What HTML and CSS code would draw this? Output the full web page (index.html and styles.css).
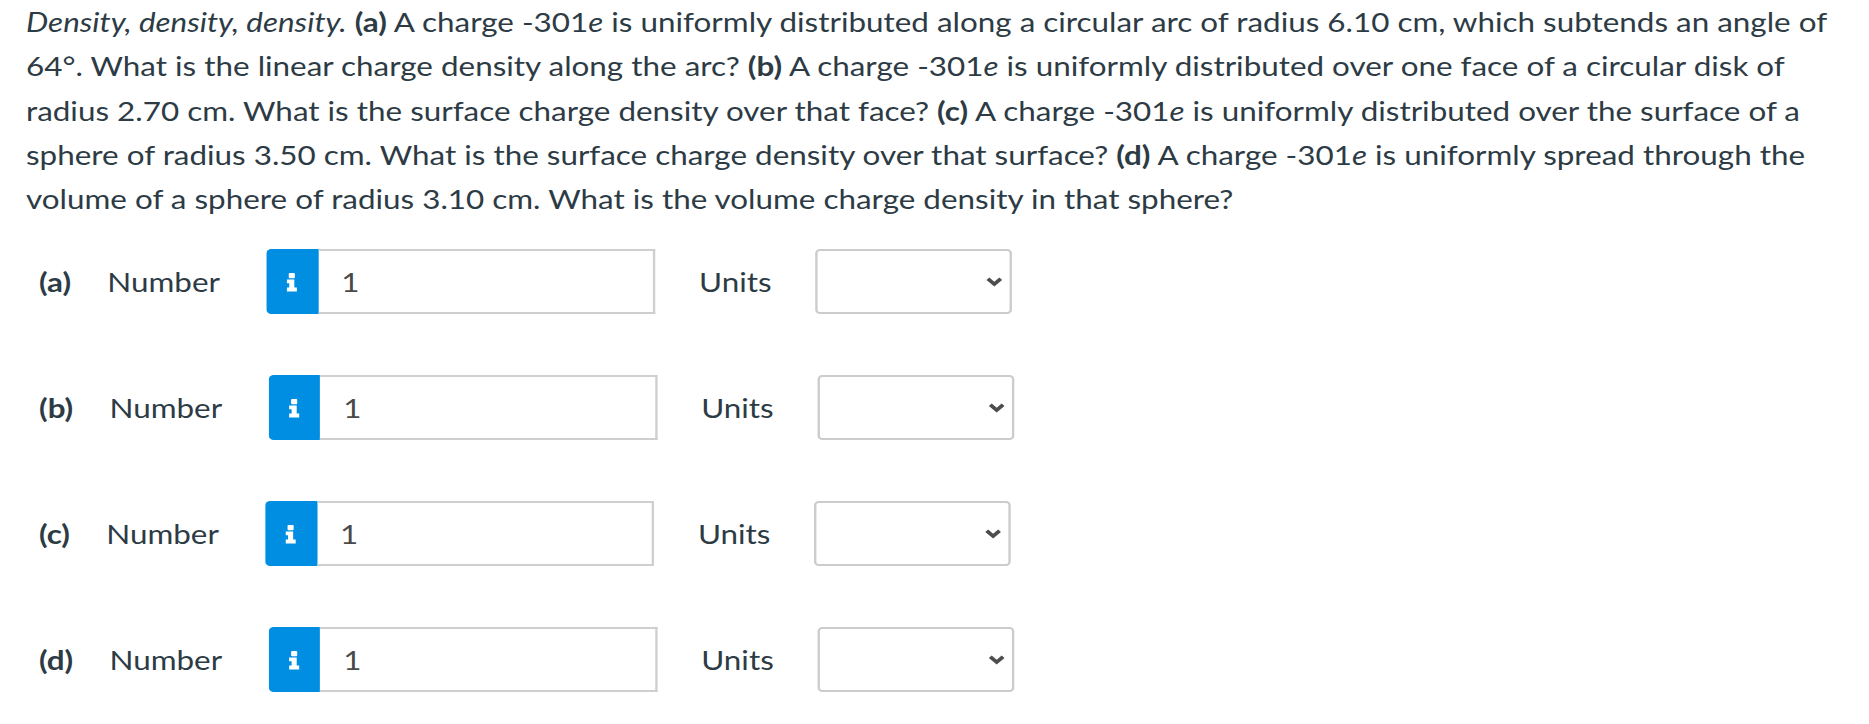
FILE: index.html
```html
<!DOCTYPE html>
<html>
<head>
<meta charset="utf-8">
<link rel="stylesheet" href="styles.css">
</head>
<body>
<div class="question">
  <p class="prompt"><em>Density, density, density.</em> <strong>(a)</strong> A charge -301<em>e</em> is uniformly distributed along a circular arc of radius 6.10 cm, which subtends an angle of<br>64°. What is the linear charge density along the arc? <strong>(b)</strong> A charge -301<em>e</em> is uniformly distributed over one face of a circular disk of<br>radius 2.70 cm. What is the surface charge density over that face? <strong>(c)</strong> A charge -301<em>e</em> is uniformly distributed over the surface of a<br>sphere of radius 3.50 cm. What is the surface charge density over that surface? <strong>(d)</strong> A charge -301<em>e</em> is uniformly spread through the<br>volume of a sphere of radius 3.10 cm. What is the volume charge density in that sphere?</p>

  <div class="answers">
    <div class="row">
      <span class="part">(a)</span>
      <span class="label">Number</span>
      <div class="group">
        <span class="addon"><svg width="10" height="22" viewBox="0 0 10 22"><path d="M3 0.5h4a1 1 0 0 1 1 1v4a1 1 0 0 1-1 1H3a1 1 0 0 1-1-1v-4a1 1 0 0 1 1-1z M0 8h7.5v9.5H10V22H0v-4.5h2.5v-5H0z" fill="#fff"/></svg></span>
        <span class="field">1</span>
      </div>
      <span class="units">Units</span>
      <div class="select"><svg class="chev" width="15" height="10" viewBox="0 0 15 10"><path d="M1.8 1.8L7.5 7.5l5.7-5.7" fill="none" stroke="#4d4d4d" stroke-width="3.6"/></svg></div>
    </div>
    <div class="row">
      <span class="part">(b)</span>
      <span class="label">Number</span>
      <div class="group">
        <span class="addon"><svg width="10" height="22" viewBox="0 0 10 22"><path d="M3 0.5h4a1 1 0 0 1 1 1v4a1 1 0 0 1-1 1H3a1 1 0 0 1-1-1v-4a1 1 0 0 1 1-1z M0 8h7.5v9.5H10V22H0v-4.5h2.5v-5H0z" fill="#fff"/></svg></span>
        <span class="field">1</span>
      </div>
      <span class="units">Units</span>
      <div class="select"><svg class="chev" width="15" height="10" viewBox="0 0 15 10"><path d="M1.8 1.8L7.5 7.5l5.7-5.7" fill="none" stroke="#4d4d4d" stroke-width="3.6"/></svg></div>
    </div>
    <div class="row">
      <span class="part">(c)</span>
      <span class="label">Number</span>
      <div class="group">
        <span class="addon"><svg width="10" height="22" viewBox="0 0 10 22"><path d="M3 0.5h4a1 1 0 0 1 1 1v4a1 1 0 0 1-1 1H3a1 1 0 0 1-1-1v-4a1 1 0 0 1 1-1z M0 8h7.5v9.5H10V22H0v-4.5h2.5v-5H0z" fill="#fff"/></svg></span>
        <span class="field">1</span>
      </div>
      <span class="units">Units</span>
      <div class="select"><svg class="chev" width="15" height="10" viewBox="0 0 15 10"><path d="M1.8 1.8L7.5 7.5l5.7-5.7" fill="none" stroke="#4d4d4d" stroke-width="3.6"/></svg></div>
    </div>
    <div class="row">
      <span class="part">(d)</span>
      <span class="label">Number</span>
      <div class="group">
        <span class="addon"><svg width="10" height="22" viewBox="0 0 10 22"><path d="M3 0.5h4a1 1 0 0 1 1 1v4a1 1 0 0 1-1 1H3a1 1 0 0 1-1-1v-4a1 1 0 0 1 1-1z M0 8h7.5v9.5H10V22H0v-4.5h2.5v-5H0z" fill="#fff"/></svg></span>
        <span class="field">1</span>
      </div>
      <span class="units">Units</span>
      <div class="select"><svg class="chev" width="15" height="10" viewBox="0 0 15 10"><path d="M1.8 1.8L7.5 7.5l5.7-5.7" fill="none" stroke="#4d4d4d" stroke-width="3.6"/></svg></div>
    </div>
  </div>
</div>
</body>
</html>
```

FILE: styles.css
```css
html, body {
  margin: 0;
  padding: 0;
  background: #fff;
  overflow: hidden;
}
body {
  font-family: Lato, "Noto Sans", sans-serif;
  color: #2d3b45;
  font-size: 26.5px;
  line-height: 44.3px;
  padding-left: 26px;
}
/* the source capture is horizontally stretched; widths below are in unscaled units */
.question {
  width: 1550px;
  transform: scaleX(1.185);
  transform-origin: 0 0;
}
.prompt {
  margin: 0;
  white-space: nowrap;
}
.prompt em {
  font-style: italic;
}
.prompt strong {
  font-weight: 700;
}
.answers {
  display: flex;
  flex-direction: column;
  gap: 61px;
  margin-top: 28px;
  padding-left: 11px;
}
.row {
  display: flex;
  align-items: center;
  height: 65px;
}
.part {
  font-weight: 700;
}
.label {
  margin-left: 30.6px;
}
.group {
  display: flex;
  margin-left: 39.1px;
  height: 65px;
}
.addon {
  width: 43.8px;
  height: 65px;
  background: #008ee2;
  border-radius: 4px 0 0 4px;
  display: flex;
  align-items: center;
  justify-content: center;
}
.addon svg {
  width: 8.6px;
  height: 22px;
}
.field {
  box-sizing: border-box;
  width: 284.4px;
  height: 65px;
  border: 2px solid #cfcfcf;
  border-left: none;
  padding-left: 19.4px;
  display: flex;
  align-items: center;
  color: #4a4a4a;
}
.units {
  margin-left: 37px;
}
.select {
  box-sizing: border-box;
  margin-left: 36.7px;
  width: 166.2px;
  height: 65px;
  border: 2px solid #cccccc;
  border-radius: 4px;
  display: flex;
  align-items: center;
  justify-content: flex-end;
  padding-right: 5.6px;
}
.chev {
  display: block;
  width: 14.3px;
  height: 9.5px;
}
```
